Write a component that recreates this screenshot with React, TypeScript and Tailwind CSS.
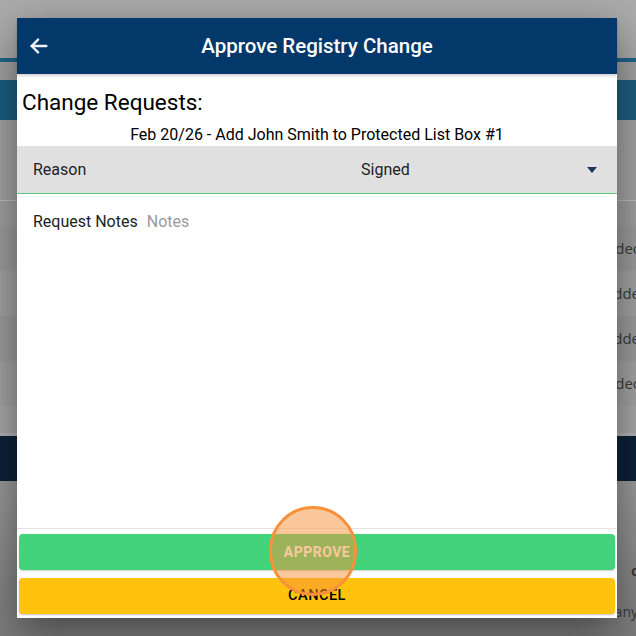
import React from "react";

const rows = ["dec", "dde", "dde", "dec"];

function BackgroundApp() {
  return (
    <div className="flex flex-col">
      <div className="h-[58px] bg-[#ababab]" />
      <div className="h-[4px] bg-[#1f6688]" />
      <div className="h-[18px] bg-[#a2a2a2]" />
      <div className="h-[40px] bg-[#1c5f80]" />
      <div className="h-[80px] bg-[#a3a3a3]" />
      <div className="h-[1px] bg-[#bdbdbd]" />
      <div className="h-[25px] bg-[#a0a0a0]" />
      {rows.map((r, i) => (
        <div
          key={i}
          className={`flex h-[45px] items-center justify-end overflow-hidden text-[15px] text-[#3b3b3b] ${i % 2 === 0 ? "bg-[#9c9c9c]" : "bg-[#a3a3a3]"}`}
        >
          <span className="mr-[-4px] font-['Open_Sans']">{r}</span>
        </div>
      ))}
      <div className="h-[27px] bg-[#a8a8a8]" />
      <div className="h-[3px] bg-[#b3b3b3]" />
      <div className="h-[45px] bg-[#0c2138]" />
      <div className="flex h-[156px] flex-col items-end overflow-hidden bg-[linear-gradient(#9a9a9a,#7c7c7c)] pt-[79px]">
        <span className="mr-[-3px] text-[15px] font-bold text-[#3a3a3a]">c</span>
        <span className="mr-[-2px] mt-[18px] font-['Open_Sans'] text-[14px] text-[#3a3a3a]">any</span>
      </div>
    </div>
  );
}

export default function App() {
  return (
    <div className="relative h-[636px] w-[636px] overflow-hidden bg-[#ababab] font-['Roboto',sans-serif]">
      <BackgroundApp />

      <div className="absolute left-[17px] top-[18px] flex h-[600px] w-[600px] flex-col bg-white shadow-[0_14px_40px_rgba(0,0,0,0.45)]">
        <div className="relative flex h-[56px] items-center justify-center bg-[#02386a] shadow-[0_2px_3px_rgba(0,0,0,0.18)]">
          <svg
            className="absolute left-[11px] top-[17px]"
            width="22"
            height="22"
            viewBox="0 0 24 24"
            fill="none"
            stroke="#eef3f8"
            strokeWidth="2.6"
            strokeLinecap="round"
            strokeLinejoin="round"
          >
            <path d="M20 12H4" />
            <path d="M11 5l-7 7 7 7" />
          </svg>
          <span className="text-[20.5px] font-medium text-white">Approve Registry Change</span>
        </div>

        <div className="px-[5px] pt-[15px] text-[22.5px] leading-[26px] text-black">
          Change Requests:
        </div>
        <div className="mt-[10px] text-center text-[16px] leading-[20px] text-black">
          Feb 20/26 - Add John Smith to Protected List Box #1
        </div>

        <div className="mt-[1px] flex h-[48px] items-center border-b-[1.5px] border-[#5ccc89] bg-[#e0e0e0] pl-[16px] pr-[20px] text-[16px] text-[#222]">
          <span className="w-[328px]">Reason</span>
          <span className="flex-1">Signed</span>
          <svg width="10" height="6" viewBox="0 0 10 6">
            <path d="M0 0h10L5 6z" fill="#1d3556" />
          </svg>
        </div>

        <div className="flex items-center gap-[9px] pl-[16px] pt-[18px] text-[16px] leading-[20px]">
          <span className="text-[#222]">Request Notes</span>
          <span className="text-[#9a9a9a]">Notes</span>
        </div>

        <div className="flex-1" />

        <div className="flex flex-col gap-[8px] border-t border-[#e4e4e4] px-[2px] pb-[4px] pt-[5px]">
          <div className="flex h-[36px] items-center justify-center rounded-[4px] bg-[#43d47b] text-[14px] font-bold tracking-[0.5px] text-white shadow-[0_1px_2px_rgba(0,0,0,0.2)]">
            APPROVE
          </div>
          <div className="flex h-[36px] items-center justify-center rounded-[4px] bg-[#ffc30e] text-[14.5px] font-medium tracking-[0.5px] text-black shadow-[0_1px_2px_rgba(0,0,0,0.25)]">
            CANCEL
          </div>
        </div>

        <div className="absolute left-[252px] top-[488px] h-[90px] w-[88px] rounded-full border-[3px] border-[#f7923a] bg-[rgba(247,146,58,0.5)]" />
      </div>
    </div>
  );
}
